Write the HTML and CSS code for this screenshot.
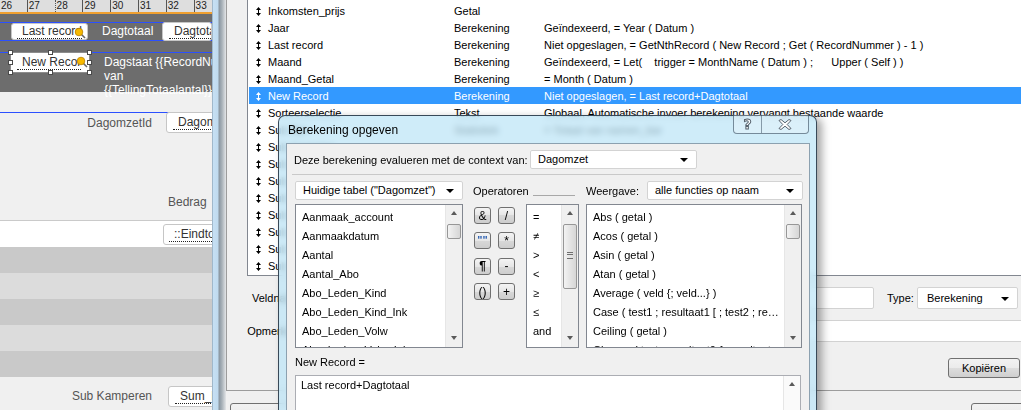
FILE: index.html
```html
<!DOCTYPE html>
<html lang="nl">

<head>
  <meta charset="utf-8">
  <title>Berekening opgeven</title>
  <link rel="stylesheet" href="styles.css">
</head>

<body>
  <div class="screen">

    <!-- layout window (left) -->
    <div class="layout">
      <div class="ruler">
        <span class="tick first">26</span>
        <span class="tick">27</span>
        <span class="tick dotted">28</span>
        <span class="tick">29</span>
        <span class="tick">30</span>
        <span class="tick">31</span>
        <span class="tick">32</span>
        <span class="tick">33</span>
      </div>
      <div class="band">
        <div class="band-row first">
          <div class="fld lr">
            <span class="fname">Last record</span>
            <svg class="badge" width="12" height="12" viewBox="0 0 12 12"><line x1="7" y1="7" x2="11" y2="11" stroke="#666" stroke-width="1.6"/><circle cx="5" cy="5" r="3.8" fill="#f6b900" stroke="#b98000" stroke-width="0.8"/></svg>
          </div>
          <span class="band-label">Dagtotaal</span>
          <div class="fld dt"><span class="fname">Dagtotaal</span></div>
        </div>
        <div class="band-row second">
          <div class="fld nr selected">
            <span class="fname clip">New Record</span>
            <svg class="badge" width="12" height="12" viewBox="0 0 12 12"><line x1="7" y1="7" x2="11" y2="11" stroke="#666" stroke-width="1.6"/><circle cx="5" cy="5" r="3.8" fill="#f6b900" stroke="#b98000" stroke-width="0.8"/></svg>
            <span class="h tl"></span><span class="h tm"></span><span class="h tr"></span>
            <span class="h ml"></span><span class="h mr"></span>
            <span class="h bl"></span><span class="h bm"></span><span class="h br"></span>
          </div>
          <div class="band-text">Dagstaat {{RecordNummer}}<br>van<br>{{TellingTotaalantal}}</div>
        </div>
      </div>
      <div class="lay-body">
        <div class="id-row">
          <span class="lay-label">DagomzetId</span>
          <div class="fld"><span class="fname">DagomzetId</span></div>
        </div>
        <div class="bedrag">Bedrag</div>
        <div class="white-band">
          <div class="fld eind"><span class="fname">::Eindtotaal</span></div>
        </div>
        <div class="stripe dark"></div>
        <div class="stripe"></div>
        <div class="stripe dark"></div>
        <div class="stripe"></div>
        <div class="stripe dark"></div>
        <div class="sub-row">
          <span class="lay-label">Sub Kamperen</span>
          <div class="fld"><span class="fname">Sum_Kamperen</span></div>
        </div>
      </div>
    </div>

    <!-- Manage database window -->
    <div class="mdb">
      <div class="mdb-edge"></div>
      <div class="mdb-client">
        <div class="panel">
          <div class="fieldlist">
            <div class="frow"><span class="ic"><svg class="sort" width="5" height="9" viewBox="0 0 5 9"><path d="M2.5 0L5 3H0zM2 3h1v3H2zM0 6h5L2.5 9z"/></svg></span><span>Inkomsten_prijs</span><span>Getal</span><span></span></div>
            <div class="frow"><span class="ic"><svg class="sort" width="5" height="9" viewBox="0 0 5 9"><path d="M2.5 0L5 3H0zM2 3h1v3H2zM0 6h5L2.5 9z"/></svg></span><span>Jaar</span><span>Berekening</span><span>Geïndexeerd, = Year ( Datum )</span></div>
            <div class="frow"><span class="ic"><svg class="sort" width="5" height="9" viewBox="0 0 5 9"><path d="M2.5 0L5 3H0zM2 3h1v3H2zM0 6h5L2.5 9z"/></svg></span><span>Last record</span><span>Berekening</span><span>Niet opgeslagen, = GetNthRecord ( New Record ; Get ( RecordNummer ) - 1 )</span></div>
            <div class="frow"><span class="ic"><svg class="sort" width="5" height="9" viewBox="0 0 5 9"><path d="M2.5 0L5 3H0zM2 3h1v3H2zM0 6h5L2.5 9z"/></svg></span><span>Maand</span><span>Berekening</span><span>Geïndexeerd, = Let(    trigger = MonthName ( Datum ) ;      Upper ( Self ) )</span></div>
            <div class="frow"><span class="ic"><svg class="sort" width="5" height="9" viewBox="0 0 5 9"><path d="M2.5 0L5 3H0zM2 3h1v3H2zM0 6h5L2.5 9z"/></svg></span><span>Maand_Getal</span><span>Berekening</span><span>= Month ( Datum )</span></div>
            <div class="frow sel"><span class="ic"><svg class="sort" width="5" height="9" viewBox="0 0 5 9"><path d="M2.5 0L5 3H0zM2 3h1v3H2zM0 6h5L2.5 9z"/></svg></span><span>New Record</span><span>Berekening</span><span>Niet opgeslagen, = Last record+Dagtotaal</span></div>
            <div class="frow"><span class="ic"><svg class="sort" width="5" height="9" viewBox="0 0 5 9"><path d="M2.5 0L5 3H0zM2 3h1v3H2zM0 6h5L2.5 9z"/></svg></span><span>Sorteerselectie</span><span>Tekst</span><span>Globaal, Automatische invoer berekening vervangt bestaande waarde</span></div>
            <div class="frow"><span class="ic"><svg class="sort" width="5" height="9" viewBox="0 0 5 9"><path d="M2.5 0L5 3H0zM2 3h1v3H2zM0 6h5L2.5 9z"/></svg></span><span>Sub Bar</span><span>Statistiek</span><span>= Totaal van namen_bar</span></div>
            <div class="frow"><span class="ic"><svg class="sort" width="5" height="9" viewBox="0 0 5 9"><path d="M2.5 0L5 3H0zM2 3h1v3H2zM0 6h5L2.5 9z"/></svg></span><span>Sub Camping</span><span></span><span></span></div>
            <div class="frow"><span class="ic"><svg class="sort" width="5" height="9" viewBox="0 0 5 9"><path d="M2.5 0L5 3H0zM2 3h1v3H2zM0 6h5L2.5 9z"/></svg></span><span>Sub</span><span></span><span></span></div>
            <div class="frow"><span class="ic"><svg class="sort" width="5" height="9" viewBox="0 0 5 9"><path d="M2.5 0L5 3H0zM2 3h1v3H2zM0 6h5L2.5 9z"/></svg></span><span>Sub</span><span></span><span></span></div>
            <div class="frow"><span class="ic"><svg class="sort" width="5" height="9" viewBox="0 0 5 9"><path d="M2.5 0L5 3H0zM2 3h1v3H2zM0 6h5L2.5 9z"/></svg></span><span>Sub</span><span></span><span></span></div>
            <div class="frow"><span class="ic"><svg class="sort" width="5" height="9" viewBox="0 0 5 9"><path d="M2.5 0L5 3H0zM2 3h1v3H2zM0 6h5L2.5 9z"/></svg></span><span>Sub</span><span></span><span></span></div>
            <div class="frow"><span class="ic"><svg class="sort" width="5" height="9" viewBox="0 0 5 9"><path d="M2.5 0L5 3H0zM2 3h1v3H2zM0 6h5L2.5 9z"/></svg></span><span>Sub</span><span></span><span></span></div>
            <div class="frow"><span class="ic"><svg class="sort" width="5" height="9" viewBox="0 0 5 9"><path d="M2.5 0L5 3H0zM2 3h1v3H2zM0 6h5L2.5 9z"/></svg></span><span>Sub</span><span></span><span></span></div>
            <div class="frow"><span class="ic"><svg class="sort" width="5" height="9" viewBox="0 0 5 9"><path d="M2.5 0L5 3H0zM2 3h1v3H2zM0 6h5L2.5 9z"/></svg></span><span>Sub</span><span></span><span></span></div>
          </div>
          <div class="prop-row">
            <span class="prop-label">Veldnaam:</span>
            <div class="input veld"></div>
            <span class="type-label">Type:</span>
            <div class="combo type">Berekening</div>
          </div>
          <div class="prop-row">
            <span class="prop-label">Opmerking:</span>
            <div class="input opm"></div>
          </div>
          <div class="copy-row"><button class="win-btn copy" type="button">Kopiëren</button></div>
        </div>
        <div class="mdb-buttons">
          <button class="win-btn left" type="button"></button>
          <button class="win-btn right" type="button"></button>
        </div>
      </div>
    </div>

    <!-- Specify calculation dialog -->
    <div class="dialog">
      <div class="titlebar">
        <span class="title">Berekening opgeven</span>
        <div class="caption-btns">
          <span class="cb help">?</span>
          <span class="cb close"><svg width="14" height="11" viewBox="0 0 14 11"><path d="M1 1.5L3 .5L7 3.8L11 .5L13 1.5L9.2 5.5L13 9.5L11 10.5L7 7.2L3 10.5L1 9.5L4.8 5.5Z" fill="#fff" stroke="#56626d" stroke-width="1"/></svg></span>
        </div>
      </div>
      <div class="client">
        <div class="ctx-row">
          <span class="ctx-text">Deze berekening evalueren met de context van:</span>
          <div class="combo ctx">Dagomzet</div>
        </div>
        <div class="sep"></div>
        <div class="pick-row">
          <div class="combo table">Huidige tabel ("Dagomzet")</div>
          <span class="op-label">Operatoren</span>
          <span class="op-line"></span>
          <span class="view-label">Weergave:</span>
          <div class="combo view">alle functies op naam</div>
        </div>
        <div class="lists-row">
          <div class="listbox fields">
            <div class="items">
              <div>Aanmaak_account</div>
              <div>Aanmaakdatum</div>
              <div>Aantal</div>
              <div>Aantal_Abo</div>
              <div>Abo_Leden_Kind</div>
              <div>Abo_Leden_Kind_Ink</div>
              <div>Abo_Leden_Volw</div>
              <div>Abo_Leden_Volw_Ink</div>
            </div>
            <div class="vscroll"><span class="arr up"></span><span class="thumb"></span><span class="track"></span><span class="arr down"></span></div>
          </div>
          <div class="op-buttons">
            <span class="opb">&amp;</span>
            <span class="opb">/</span>
            <span class="opb quote">""</span>
            <span class="opb">*</span>
            <span class="opb bold">¶</span>
            <span class="opb">-</span>
            <span class="opb">()</span>
            <span class="opb">+</span>
          </div>
          <div class="listbox ops">
            <div class="items">
              <div>=</div>
              <div>≠</div>
              <div>&gt;</div>
              <div>&lt;</div>
              <div>≥</div>
              <div>≤</div>
              <div>and</div>
              <div>or</div>
            </div>
            <div class="vscroll"><span class="arr up"></span><span class="thumb big"></span><span class="track"></span><span class="arr down"></span></div>
          </div>
          <div class="listbox funcs">
            <div class="items">
              <div>Abs ( getal )</div>
              <div>Acos ( getal )</div>
              <div>Asin ( getal )</div>
              <div>Atan ( getal )</div>
              <div>Average ( veld {; veld...} )</div>
              <div>Case ( test1 ; resultaat1 [ ; test2 ; resultaat2 ; ... ] ; standaardresultaat )</div>
              <div>Ceiling ( getal )</div>
              <div>Choose ( test ; resultaat0 {; resultaat1 ; ...} )</div>
            </div>
            <div class="vscroll"><span class="arr up"></span><span class="thumb"></span><span class="track"></span><span class="arr down"></span></div>
          </div>
        </div>
        <div class="calc-label">New Record =</div>
        <div class="calc-box">
          <div class="calc-text">Last record+Dagtotaal</div>
          <div class="vscroll"><span class="arr up"></span><span class="track"></span></div>
        </div>
      </div>
    </div>

  </div>
</body>

</html>
```

FILE: styles.css
```css
* {
  box-sizing: border-box;
}

body {
  margin: 0;
  width: 1021px;
  height: 410px;
  overflow: hidden;
  font-family: "Liberation Sans", Arial, sans-serif;
  font-size: 11px;
  color: #000;
  background: #f0f0f0;
}

.screen {
  position: relative;
  width: 1021px;
  height: 410px;
  overflow: hidden;
}

/* ---------- layout window ---------- */
.layout {
  width: 212px;
  height: 410px;
  overflow: hidden;
  background: #f0f0f0;
}

.ruler {
  display: flex;
  height: 14px;
  background: #dedede;
  border-bottom: 2px solid #f0a030;
  font-size: 10px;
  line-height: 12px;
  color: #222;
  white-space: nowrap;
}

.tick {
  flex: none;
  width: 27.8px;
  padding-left: 1px;
  border-left: 1px solid #555;
}

.tick.first {
  margin-left: -1px;
}

.tick.dotted {
  border-left-style: dotted;
}

.band {
  height: 78px;
  padding-top: 8px;
  background: #6d6d6d;
}

.band-row {
  display: flex;
  border-top: 1px solid #2b50ff;
  white-space: nowrap;
}

.band-row.first {
  height: 19px;
  border-bottom: 1px solid #2b50ff;
}

.band-row.second {
  margin-top: 11px;
  height: 40px;
}

.fld {
  position: relative;
  flex: none;
  display: flex;
  align-items: center;
  padding-left: 6px;
  background: #fff;
  border: 1px solid #c6c6c6;
  border-radius: 3px;
  font-size: 12px;
  color: #333;
  white-space: nowrap;
  overflow: hidden;
}

.fname {
  padding-left: 5px;
  line-height: 13px;
  border-bottom: 1px dotted #222;
}

.fld.lr {
  margin-left: 11px;
  width: 77px;
  height: 17px;
  padding-left: 5px;
}

.badge {
  position: absolute;
  right: 1px;
  top: 3px;
}

.band-label {
  width: 65px;
  margin-left: 14px;
  font-size: 12px;
  line-height: 17px;
  color: #fff;
}

.fld.dt {
  width: 50px;
  height: 19px;
  margin-top: -1px;
}

.fld.nr {
  margin-left: 10px;
  margin-top: -1px;
  width: 80px;
  height: 21px;
  padding-left: 6px;
  border-color: #8c8c8c;
  overflow: visible;
}

.fname.clip {
  display: block;
  width: 64px;
  overflow: hidden;
}

.h {
  position: absolute;
  width: 5px;
  height: 5px;
  background: #fff;
  border: 1px solid #4a4a4a;
}

.h.tl { left: -3px; top: -3px; }
.h.tm { left: calc(50% - 2.5px); top: -3px; }
.h.tr { right: -3px; top: -3px; }
.h.ml { left: -3px; top: calc(50% - 2.5px); }
.h.mr { right: -3px; top: calc(50% - 2.5px); }
.h.bl { left: -3px; bottom: -3px; }
.h.bm { left: calc(50% - 2.5px); bottom: -3px; }
.h.br { right: -3px; bottom: -3px; }

.band-text {
  margin-left: 14px;
  padding-top: 2px;
  font-size: 12px;
  line-height: 14px;
  color: #fff;
}

.id-row,
.sub-row {
  display: flex;
  height: 22px;
}

.id-row {
  margin-top: 20px;
  border-top: 1px solid #2b50ff;
}

.lay-label {
  flex: none;
  width: 152px;
  text-align: right;
  font-size: 12px;
  line-height: 21px;
  color: #555;
}

.id-row .fld {
  margin-left: 14px;
  margin-top: -1px;
  width: 60px;
  height: 21px;
}

.bedrag {
  margin-top: 61px;
  padding-left: 168px;
  font-size: 12px;
  line-height: 14px;
  color: #555;
}

.white-band {
  margin-top: 11px;
  height: 27px;
  padding-top: 3px;
  background: #fff;
  border-top: 1px solid #cacaca;
}

.fld.eind {
  margin-left: 163px;
  width: 60px;
  height: 21px;
  padding-left: 5px;
}

.stripe {
  height: 26px;
  background: #dcdcdc;
}

.stripe.dark {
  background: #c9c9c9;
}

.sub-row {
  margin-top: 9px;
}

.sub-row .fld {
  margin-left: 16px;
  width: 60px;
  height: 21px;
}

/* ---------- manage database window ---------- */
.mdb {
  position: absolute;
  left: 212px;
  top: 0;
  width: 830px;
  height: 410px;
  display: flex;
}

.mdb-edge {
  flex: none;
  width: 14px;
  background: linear-gradient(to right, #7a90a2 0, #c6e0f4 1px, #c0daee 6px, #8996a1 7px, #a9b2b9 10px, #e3e5e7 14px);
}

.mdb-client {
  flex: 1;
  background: #f0f0f0;
}

.panel {
  height: 391px;
  padding-left: 20px;
  border-left: 1px solid #9c9c9c;
  border-bottom: 1px solid #9c9c9c;
}

.fieldlist {
  width: 800px;
  height: 276px;
  padding: 2px 1px 0;
  background: #fff;
  border: 1px solid #828790;
  border-top: none;
  overflow: hidden;
}

.frow {
  display: grid;
  grid-template-columns: 19px 186px 90px auto;
  height: 17px;
  padding-top: 1px;
  line-height: 17px;
  white-space: pre;
}

.frow .ic {
  display: flex;
  align-items: center;
  padding-left: 7px;
}

.sort {
  fill: currentColor;
}

.frow.sel {
  background: #3399ff;
  color: #fff;
}

.prop-row {
  display: flex;
  align-items: center;
  height: 22px;
  margin-top: 11px;
}

.prop-label {
  flex: none;
  width: 57px;
  text-align: right;
}

.input {
  flex: none;
  height: 22px;
  margin-left: 6px;
  background: #fff;
  border: 1px solid #d2d2d2;
  border-radius: 2px;
}

.input.veld {
  width: 564px;
}

.input.opm {
  width: 720px;
}

.type-label {
  width: 30px;
  margin-left: 13px;
}

.combo {
  position: relative;
  flex: none;
  height: 19px;
  padding-left: 7px;
  line-height: 17px;
  background: #fff;
  border: 1px solid #d3d3d3;
  border-radius: 2px;
  white-space: nowrap;
}

.combo::after {
  content: "";
  position: absolute;
  right: 8px;
  top: 7px;
  border-left: 4px solid transparent;
  border-right: 4px solid transparent;
  border-top: 4px solid #000;
}

.combo.type {
  width: 101px;
  height: 22px;
  line-height: 20px;
  padding-left: 9px;
}

.combo.type::after {
  top: 9px;
}

.copy-row {
  margin-top: 16px;
  padding-left: 701px;
}

.win-btn {
  display: block;
  height: 20px;
  padding: 0;
  border: 1px solid #707070;
  border-radius: 3px;
  background: linear-gradient(#f2f2f2, #ebebeb 50%, #dddddd 50%, #cfcfcf);
  font-family: "Liberation Sans", Arial, sans-serif;
  font-size: 11px;
  color: #000;
}

.win-btn.copy {
  width: 72px;
}

.mdb-buttons {
  display: flex;
  padding-top: 12px;
}

.win-btn.left {
  width: 90px;
  height: 24px;
  margin-left: 4px;
}

.win-btn.right {
  width: 75px;
  height: 24px;
  margin-left: 651px;
}

/* ---------- calculation dialog ---------- */
.dialog {
  position: absolute;
  left: 278px;
  top: 115px;
  width: 539px;
  height: 320px;
  padding: 0 6px 0 7px;
  border: 1px solid rgba(30, 45, 60, 0.85);
  border-radius: 7px 7px 0 0;
  background: rgba(188, 228, 246, 0.72);
  backdrop-filter: blur(3px);
  box-shadow: 5px 3px 8px rgba(0, 0, 0, 0.35);
}

.titlebar {
  position: relative;
  height: 27px;
}

.title {
  display: block;
  padding-left: 2px;
  font-size: 12px;
  line-height: 28px;
}

.caption-btns {
  position: absolute;
  right: 1px;
  top: -1px;
  display: flex;
  height: 19px;
  border: 1px solid rgba(50, 70, 90, 0.6);
  border-top: none;
  border-radius: 0 0 4px 4px;
  background: rgba(255, 255, 255, 0.25);
}

.cb {
  display: flex;
  align-items: center;
  justify-content: center;
}

.cb.help {
  width: 28px;
  border-right: 1px solid rgba(50, 70, 90, 0.5);
  font-family: "DejaVu Sans", sans-serif;
  font-size: 14px;
  font-weight: bold;
  color: #fff;
  -webkit-text-stroke: 1px #56626d;
}

.cb.close {
  width: 46px;
}

.client {
  height: 280px;
  background: #f0f0f0;
  border: 1px solid #8ca1b0;
}

.ctx-row {
  display: flex;
  align-items: center;
  height: 19px;
  margin-top: 6px;
  padding-left: 7px;
}

.ctx-text {
  flex: none;
  width: 236px;
  white-space: nowrap;
}

.combo.ctx {
  width: 167px;
}

.sep {
  margin: 5px 7px 0 5px;
  border-top: 1px solid #c9c9c9;
}

.pick-row {
  display: flex;
  align-items: center;
  height: 19px;
  margin-top: 6px;
  padding-left: 8px;
}

.combo.table {
  width: 168px;
}

.op-label {
  flex: none;
  width: 60px;
  margin-left: 10px;
}

.op-line {
  flex: none;
  width: 42px;
  height: 1px;
  margin-top: 9px;
  background: #a8a8a8;
}

.view-label {
  flex: none;
  width: 61px;
  margin-left: 11px;
}

.combo.view {
  width: 156px;
}

.lists-row {
  display: flex;
  align-items: flex-start;
  height: 144px;
  margin-top: 4px;
  padding-left: 8px;
}

.listbox {
  flex: none;
  display: flex;
  height: 144px;
  background: #fff;
  border: 1px solid #828790;
  overflow: hidden;
}

.listbox.fields {
  width: 168px;
}

.listbox.ops {
  width: 53px;
  margin-left: 11px;
}

.listbox.funcs {
  width: 216px;
  margin-left: 7px;
}

.items {
  flex: 1;
  min-width: 0;
  padding: 3px 0 0 6px;
}

.items div {
  height: 19px;
  line-height: 19px;
  white-space: nowrap;
  overflow: hidden;
  text-overflow: ellipsis;
}

.vscroll {
  flex: none;
  display: flex;
  flex-direction: column;
  align-items: center;
  width: 17px;
  background: #f0f0f0;
  border-left: 1px solid #e6e6e6;
}

.arr {
  flex: none;
  width: 17px;
  height: 17px;
  position: relative;
}

.arr::after {
  content: "";
  position: absolute;
  left: 5px;
  top: 6px;
  border-left: 3.5px solid transparent;
  border-right: 3.5px solid transparent;
}

.arr.up::after {
  border-bottom: 4px solid #5a5a5a;
}

.arr.down::after {
  border-top: 4px solid #5a5a5a;
}

.thumb {
  position: relative;
  flex: none;
  width: 14px;
  height: 15px;
  margin-top: 2px;
  border: 1px solid #979797;
  border-radius: 2px;
  background: linear-gradient(to right, #f3f3f3, #e4e4e4 50%, #d6d6d6);
}

.thumb.big {
  height: 65px;
}

.thumb.big::after {
  content: "";
  position: absolute;
  left: 3px;
  right: 3px;
  top: 27px;
  height: 5px;
  border-top: 1px solid #6f6f6f;
  border-bottom: 1px solid #6f6f6f;
  background: linear-gradient(transparent 1px, #6f6f6f 1px, #6f6f6f 2px, transparent 2px);
}

.track {
  flex: 1;
}

.op-buttons {
  flex: none;
  display: grid;
  grid-template-columns: 17px 17px;
  grid-auto-rows: 17px;
  column-gap: 7px;
  row-gap: 8.4px;
  margin: 3px 0 0 11px;
}

.opb {
  display: flex;
  align-items: center;
  justify-content: center;
  border: 1px solid #707070;
  border-radius: 3px;
  background: linear-gradient(#f4f4f4, #e6e6e6 50%, #d8d8d8 50%, #cdcdcd);
  font-size: 12px;
  line-height: 1;
}

.opb.quote {
  color: #2f62b3;
  font-size: 11px;
  font-weight: bold;
}

.opb.bold {
  font-weight: bold;
}

.calc-label {
  margin-top: 7px;
  padding-left: 8px;
  line-height: 14px;
}

.calc-box {
  display: flex;
  width: 506px;
  height: 60px;
  margin: 6px 0 0 8px;
  background: #fff;
  border: 1px solid #abadb3;
}

.calc-text {
  flex: 1;
  padding: 3px 5px;
  line-height: 13px;
}

.calc-box .vscroll {
  background: #fafafa;
}
```
